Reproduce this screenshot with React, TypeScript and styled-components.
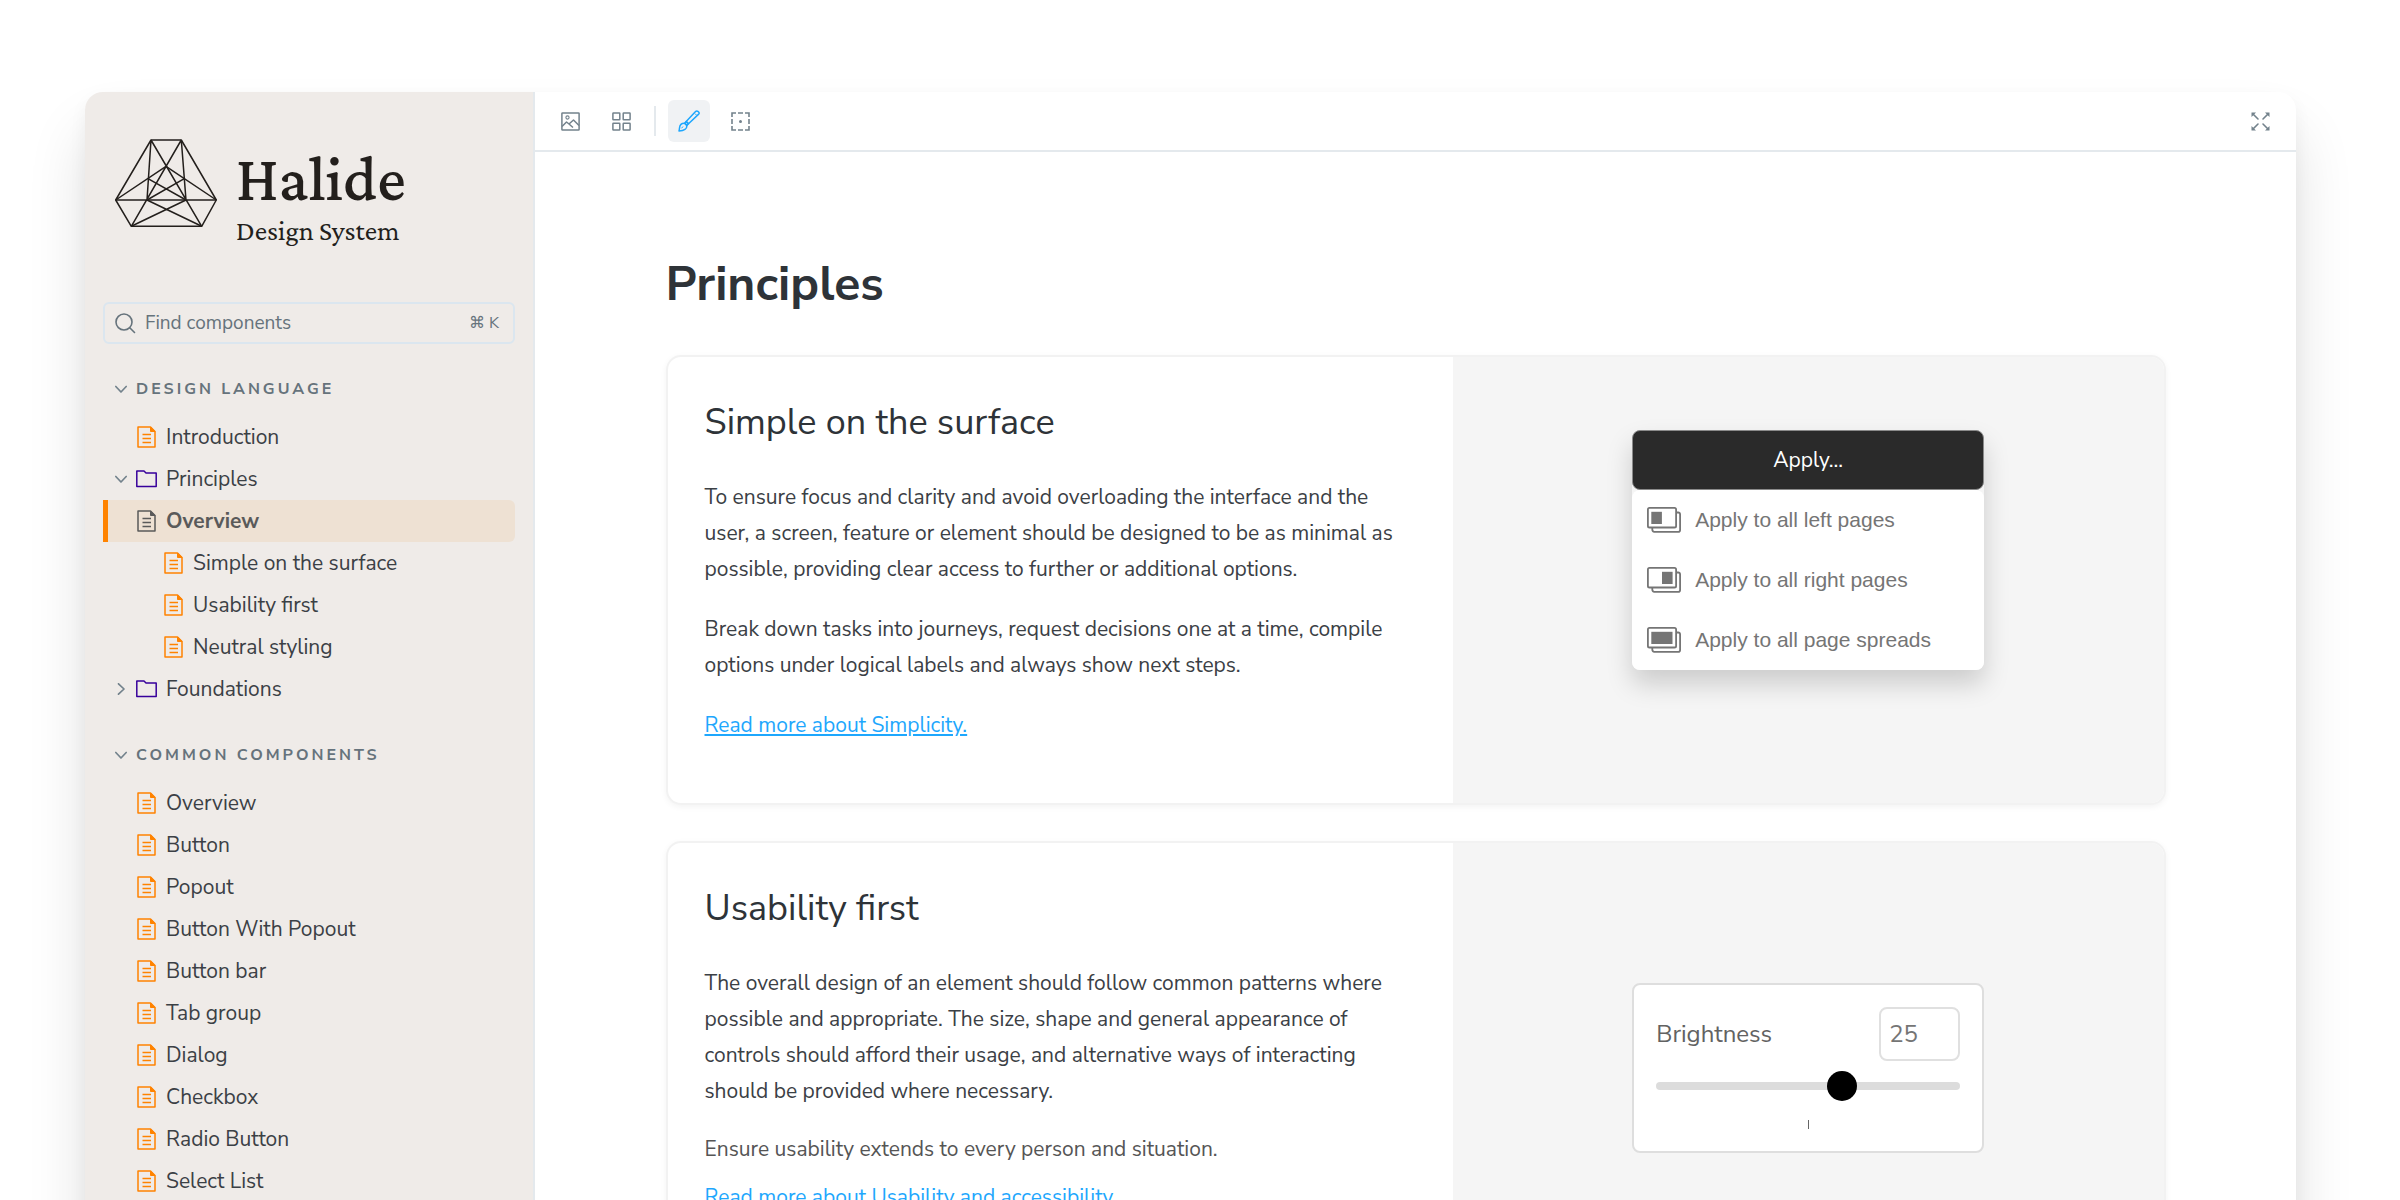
import React from 'react';
import styled, { createGlobalStyle, css } from 'styled-components';

const sans = `"Nunito Sans", "Open Sans", "Noto Sans", sans-serif`;
const serif = `"Crimson Pro", "Crimson Text", "Liberation Serif", serif`;
const color = {
  sidebar: '#efebe8',
  line: '#e4e9ed',
  muted: '#66737c',
  icon: '#73828c',
  text: '#3b4045',
  heading: '#2e3338',
  link: '#1ea7fd',
  orange: '#ff8300',
  indigo: '#37009b',
};

const GlobalStyle = createGlobalStyle`
  *, *::before, *::after { box-sizing: border-box; }
  html, body { margin: 0; background: #fff; }
  body {
    font-family: ${sans};
    font-size: 21px;
    line-height: 36px;
    color: ${color.text};
    -webkit-font-smoothing: antialiased;
  }
  button, input { font-family: inherit; }
`;

const Page = styled.div`
  display: flex;
  height: 100vh;
  overflow: hidden;
  padding: 92px 104px 0 85px;
`;

const Window = styled.div`
  flex: 1;
  display: flex;
  min-height: 1240px;
  border-radius: 18px;
  background: #fff;
  box-shadow: 0 40px 60px rgba(0, 0, 0, 0.12), 0 8px 18px rgba(0, 0, 0, 0.05);
`;

const Sidebar = styled.aside`
  flex: none;
  width: 450px;
  padding: 45px 18px 0;
  border-right: 2px solid ${color.line};
  border-radius: 18px 0 0 0;
  background: ${color.sidebar};
`;

const Brand = styled.a`
  display: flex;
  gap: 19px;
  height: 165px;
  padding: 2px 12px 0;
  color: #231f1c;
  text-decoration: none;
`;

const BrandText = styled.span`
  display: flex;
  flex-direction: column;
  font-family: ${serif};
`;

const BrandName = styled.span`
  font-size: 64px;
  font-weight: 500;
  line-height: 80px;
`;

const BrandSub = styled.span`
  font-size: 28px;
  line-height: 24px;
`;

const Search = styled.label`
  display: flex;
  align-items: center;
  gap: 9px;
  height: 42px;
  padding: 0 14px 0 10px;
  border: 2px solid #dbe6ef;
  border-radius: 6px;
  color: ${color.muted};
`;

const SearchInput = styled.input`
  flex: 1;
  min-width: 0;
  padding: 0;
  border: 0;
  outline: 0;
  background: transparent;
  font-size: 19px;
  color: inherit;
  &::placeholder { color: inherit; opacity: 1; }
`;

const Shortcut = styled.kbd`
  display: flex;
  align-items: center;
  gap: 4px;
  font-family: inherit;
  font-size: 16px;
  line-height: 24px;
`;

const SectionToggle = styled.button`
  display: flex;
  align-items: center;
  gap: 9px;
  width: 100%;
  height: 36px;
  margin: 27px 0 9px;
  padding: 0 12px;
  border: 0;
  background: none;
  color: ${color.muted};
  font-size: 16px;
  font-weight: 700;
  line-height: 24px;
  letter-spacing: 3px;
  text-transform: uppercase;
`;

const NavList = styled.ul`
  margin: 0;
  padding: 0;
  list-style: none;
`;

const NavLink = styled.a<{ $nested?: boolean; $active?: boolean }>`
  display: flex;
  align-items: center;
  gap: 9px;
  height: 42px;
  padding-left: ${(p) => (p.$nested ? 39 : 12)}px;
  color: ${color.text};
  text-decoration: none;
  ${(p) =>
    p.$active &&
    css`
      border-radius: 0 6px 6px 0;
      background: #eee1d3;
      box-shadow: inset 5px 0 ${color.orange};
      color: #5a5a5a;
      font-weight: 700;
    `}
`;

const ChevronSlot = styled.span`
  display: flex;
  flex: none;
  width: 12px;
  color: ${color.icon};
`;

const IconSlot = styled.span<{ $color: string }>`
  display: flex;
  flex: none;
  width: 21px;
  justify-content: center;
  color: ${(p) => p.$color};
`;

const Main = styled.main`
  flex: 1;
  min-width: 0;
`;

const Toolbar = styled.div`
  display: flex;
  align-items: center;
  gap: 9px;
  height: 60px;
  padding: 0 15px 0 14px;
  border-bottom: 2px solid ${color.line};
`;

const ToolButton = styled.button<{ $active?: boolean; $last?: boolean }>`
  display: flex;
  align-items: center;
  justify-content: center;
  width: 42px;
  height: 42px;
  padding: 0;
  border: 0;
  border-radius: 6px;
  background: ${(p) => (p.$active ? '#f0f2f4' : 'none')};
  color: ${(p) => (p.$active ? color.link : color.icon)};
  ${(p) => p.$last && 'margin-left: auto;'}
`;

const Divider = styled.span`
  width: 2px;
  height: 30px;
  margin: 0 3px;
  background: ${color.line};
`;

const Content = styled.div`
  display: flex;
  flex-direction: column;
  gap: 36px;
  max-width: 1500px;
  margin: 0 auto;
  padding: 100px 0 60px;
`;

const Title = styled.h1`
  margin: 0 0 3px;
  color: ${color.heading};
  font-size: 48px;
  font-weight: 700;
  line-height: 64px;
`;

const Card = styled.article<{ $tall?: boolean }>`
  display: grid;
  grid-template-columns: minmax(0, 21fr) minmax(0, 19fr);
  min-height: ${(p) => (p.$tall ? 454 : 450)}px;
  overflow: hidden;
  border: 2px solid #f2f2f2;
  border-radius: 15px;
  background: #fff;
  box-shadow: 0 2px 6px rgba(0, 0, 0, 0.05);
`;

const Copy = styled.div`
  padding: 40px 37px 36px;
`;

const CardTitle = styled.h2`
  margin: 0 0 30px;
  color: ${color.heading};
  font-size: 36px;
  font-weight: 400;
  line-height: 52px;
`;

const Paragraph = styled.p`
  margin: 0 0 24px;
`;

const Note = styled.p`
  margin: 0 0 14px;
  color: #555;
  line-height: 32px;
`;

const TextLink = styled.a`
  color: ${color.link};
  text-decoration: underline;
`;

const Preview = styled.div<{ $top?: boolean }>`
  display: flex;
  flex-direction: column;
  align-items: center;
  justify-content: ${(p) => (p.$top ? 'flex-start' : 'center')};
  padding: ${(p) => (p.$top ? '73px 24px' : '0 24px')};
  background: #f5f5f5;
`;

const Popout = styled.div`
  width: 352px;
  border-radius: 8px;
  box-shadow: 0 14px 26px rgba(0, 0, 0, 0.17);
`;

const ApplyButton = styled.button`
  display: block;
  width: 100%;
  height: 60px;
  padding: 0;
  border: 1px solid #8a8a8a;
  border-radius: 8px;
  background: #2a2a2a;
  color: #fff;
  font-size: 21px;
`;

const Menu = styled.div`
  border-radius: 8px;
  background: #fff;
`;

const MenuItem = styled.button`
  display: flex;
  align-items: center;
  gap: 14px;
  width: 100%;
  height: 60px;
  padding: 0 15px;
  border: 0;
  background: none;
  color: #757575;
  font-family: "Liberation Sans", Arial, sans-serif;
  font-size: 21px;
`;

const Widget = styled.div`
  width: 352px;
  padding: 22px;
  border: 2px solid #dedede;
  border-radius: 8px;
  background: #fff;
  color: #626262;
  font-size: 24px;
`;

const WidgetRow = styled.div`
  display: flex;
  align-items: center;
  justify-content: space-between;
`;

const ValueInput = styled.input`
  width: 81px;
  height: 54px;
  padding: 0 8px;
  border: 2px solid #e0e0e0;
  border-radius: 8px;
  background: #fff;
  color: #757575;
  font-size: 24px;
`;

const Slider = styled.input`
  display: block;
  width: 100%;
  height: 30px;
  margin: 10px 0 19px;
  appearance: none;
  background: none;
  &::-webkit-slider-runnable-track {
    height: 8px;
    border-radius: 4px;
    background: #dcdcdc;
  }
  &::-webkit-slider-thumb {
    appearance: none;
    width: 30px;
    height: 30px;
    margin-top: -11px;
    border-radius: 50%;
    background: #000;
  }
`;

const Tick = styled.div`
  width: 1px;
  height: 9px;
  margin: 0 auto;
  background: #666;
`;

const LogoMark = () => (
  <svg width="102" height="89" viewBox="0 0 102 89" fill="none" stroke="currentColor" strokeWidth="1.5" strokeLinejoin="round">
    <path d="M36 1H66.3L101.3 61L86.7 87.3H16.3L.7 61Z" />
    <path d="M.7 61H101.3M36 1L86.7 87.3M66.3 1L16.3 87.3M36 1L32 61M66.3 1L71 61" />
    <path d="M.7 61L51 27.3L101.3 61M33 39.7L71 61M69.3 39.7L32 61M32 61L86.7 87.3M71 61L16.3 87.3" />
  </svg>
);

const SearchIcon = () => (
  <svg width="21" height="21" viewBox="0 0 21 21" fill="none" stroke="currentColor" strokeWidth="1.6" strokeLinecap="round">
    <circle cx="9" cy="9" r="8" />
    <path d="M15 15L19.5 19.5" />
  </svg>
);

const Chevron = ({ right }: { right?: boolean }) => (
  <svg width="12" height="12" viewBox="0 0 12 12" fill="none" stroke="currentColor" strokeWidth="1.7" strokeLinecap="round" strokeLinejoin="round">
    <path d={right ? 'M3.5 .8L9 6L3.5 11.2' : 'M.8 3.5L6 9L11.2 3.5'} />
  </svg>
);

const DocIcon = () => (
  <svg width="19" height="22" viewBox="0 0 19 22" fill="none" stroke="currentColor" strokeWidth="1.5" strokeLinejoin="round">
    <path d="M1 1H13.5L18 5.5V21H1Z" />
    <path d="M13.5 1V5.5H18Z" fill="currentColor" strokeWidth="1" />
    <path d="M5.5 8.5H14M5.5 12.5H14M5.5 16.5H14" />
  </svg>
);

const FolderIcon = () => (
  <svg width="21" height="18" viewBox="0 0 21 18" fill="none" stroke="currentColor" strokeWidth="1.5" strokeLinejoin="round">
    <path d="M.8 1H8L10 3H20.2V16.6H.8Z" />
  </svg>
);

const ImageIcon = () => (
  <svg width="19" height="19" viewBox="0 0 19 19" fill="none" stroke="currentColor" strokeWidth="1.5" strokeLinejoin="round">
    <rect x=".9" y=".9" width="17.2" height="17.2" rx=".6" />
    <circle cx="6.5" cy="5.5" r="1.6" strokeWidth="1.1" />
    <path d="M1 14.5L5.5 10L8 12L12.5 8L18 13.5M8 12L12 15.5" />
  </svg>
);

const GridIcon = () => (
  <svg width="19" height="19" viewBox="0 0 19 19" fill="none" stroke="currentColor" strokeWidth="1.5">
    <rect x=".9" y=".9" width="6.9" height="6.9" rx=".5" />
    <rect x="11.2" y=".9" width="6.9" height="6.9" rx=".5" />
    <rect x=".9" y="11.2" width="6.9" height="6.9" rx=".5" />
    <rect x="11.2" y="11.2" width="6.9" height="6.9" rx=".5" />
  </svg>
);

const BrushIcon = () => (
  <svg width="22" height="22" viewBox="0 0 22 22" fill="none" stroke="currentColor" strokeWidth="1.5" strokeLinejoin="round">
    <path d="M8.2 11.6L17.8 1.3Q18.8 .5 19.8 1.3L20.8 2.3Q21.5 3.2 20.7 4.1L10.5 13.8Z" />
    <path d="M8.2 11.6L10.5 13.8L8.9 15.4L6.6 13.2Z" />
    <path d="M6.6 13.2L8.9 15.4Q9 20.8 1 20.9Q1.3 20 1.5 18Q2 13 6.6 13.2Z" />
    <path d="M17 3.6L18.6 5.2M5 16.5L3.5 18.3" strokeWidth="1" />
  </svg>
);

const OutlineIcon = () => (
  <svg width="19" height="19" viewBox="0 0 19 19" fill="none" stroke="currentColor" strokeWidth="1.6">
    <path d="M5 1H1V5M14 1H18V5M5 18H1V14M14 18H18V14" />
    <path d="M7 1H12M7 18H12M1 7V12M18 7V12" />
    <circle cx="9.5" cy="9.5" r="1.5" fill="currentColor" stroke="none" />
  </svg>
);

const ExpandIcon = () => (
  <svg width="19" height="19" viewBox="0 0 19 19" stroke="currentColor" strokeWidth="1.6" strokeLinecap="round">
    <path d="M2 2L7 7M17 2L12 7M2 17L7 12M17 17L12 12" />
    <path
      d="M.5 .5H5L.5 5ZM18.5 .5H14L18.5 5ZM.5 18.5H5L.5 14ZM18.5 18.5H14L18.5 14Z"
      fill="currentColor"
      stroke="none"
    />
  </svg>
);

const PagesIcon = ({ fill }: { fill: 'left' | 'right' | 'both' }) => (
  <svg width="34" height="26" viewBox="0 0 34 26" fill="none" stroke="currentColor" strokeWidth="1.8">
    <rect x=".9" y=".9" width="28.2" height="19.6" rx="1.6" />
    <path d="M5.3 20.5V22.6Q5.3 24.8 7.3 24.8H31.2Q33.1 24.8 33.1 22.9V7.4Q33.1 5.5 31.2 5.5H29.1" />
    <rect
      x={fill === 'right' ? 15 : 4.3}
      y="4.8"
      width={fill === 'both' ? 21.2 : 10.6}
      height="12.2"
      fill="currentColor"
      stroke="none"
    />
  </svg>
);

type Item = {
  label: string;
  kind?: 'doc' | 'folder';
  open?: boolean;
  nested?: boolean;
  active?: boolean;
};

const designItems: Item[] = [
  { label: 'Introduction' },
  { label: 'Principles', kind: 'folder', open: true },
  { label: 'Overview', active: true },
  { label: 'Simple on the surface', nested: true },
  { label: 'Usability first', nested: true },
  { label: 'Neutral styling', nested: true },
  { label: 'Foundations', kind: 'folder' },
];

const componentItems: Item[] = [
  'Overview',
  'Button',
  'Popout',
  'Button With Popout',
  'Button bar',
  'Tab group',
  'Dialog',
  'Checkbox',
  'Radio Button',
  'Select List',
].map((label) => ({ label }));

const NavSection = ({ title, items }: { title: string; items: Item[] }) => (
  <section>
    <SectionToggle type="button" aria-expanded="true">
      <ChevronSlot>
        <Chevron />
      </ChevronSlot>
      {title}
    </SectionToggle>
    <NavList>
      {items.map(({ label, kind, open, nested, active }) => (
        <li key={label}>
          <NavLink href="#" $nested={nested} $active={active} aria-current={active ? 'page' : undefined}>
            <ChevronSlot>{kind === 'folder' && <Chevron right={!open} />}</ChevronSlot>
            <IconSlot $color={active ? '#5a5a5a' : kind === 'folder' ? color.indigo : color.orange}>
              {kind === 'folder' ? <FolderIcon /> : <DocIcon />}
            </IconSlot>
            {label}
          </NavLink>
        </li>
      ))}
    </NavList>
  </section>
);

export default function App() {
  const [value, setValue] = React.useState(25);

  return (
    <>
      <GlobalStyle />
      <Page>
        <Window>
          <Sidebar>
            <Brand href="#">
              <LogoMark />
              <BrandText>
                <BrandName>Halide</BrandName>
                <BrandSub>Design System</BrandSub>
              </BrandText>
            </Brand>
            <Search>
              <SearchIcon />
              <SearchInput type="text" placeholder="Find components" aria-label="Find components" />
              <Shortcut>
                <span>⌘</span>
                <span>K</span>
              </Shortcut>
            </Search>
            <nav>
              <NavSection title="Design language" items={designItems} />
              <NavSection title="Common components" items={componentItems} />
            </nav>
          </Sidebar>

          <Main>
            <Toolbar>
              <ToolButton type="button" aria-label="Change background">
                <ImageIcon />
              </ToolButton>
              <ToolButton type="button" aria-label="Toggle grid">
                <GridIcon />
              </ToolButton>
              <Divider />
              <ToolButton type="button" aria-label="Change theme" $active>
                <BrushIcon />
              </ToolButton>
              <ToolButton type="button" aria-label="Toggle outline">
                <OutlineIcon />
              </ToolButton>
              <ToolButton type="button" aria-label="Full screen" $last>
                <ExpandIcon />
              </ToolButton>
            </Toolbar>

            <Content>
              <Title>Principles</Title>

              <Card>
                <Copy>
                  <CardTitle>Simple on the surface</CardTitle>
                  <Paragraph>
                    To ensure focus and clarity and avoid overloading the interface and the user, a screen, feature or
                    element should be designed to be as minimal as possible, providing clear access to further or
                    additional options.
                  </Paragraph>
                  <Paragraph>
                    Break down tasks into journeys, request decisions one at a time, compile options under logical
                    labels and always show next steps.
                  </Paragraph>
                  <Paragraph>
                    <TextLink href="#">Read more about Simplicity.</TextLink>
                  </Paragraph>
                </Copy>
                <Preview $top>
                  <Popout>
                    <ApplyButton type="button">Apply...</ApplyButton>
                    <Menu>
                      <MenuItem type="button">
                        <PagesIcon fill="left" />
                        Apply to all left pages
                      </MenuItem>
                      <MenuItem type="button">
                        <PagesIcon fill="right" />
                        Apply to all right pages
                      </MenuItem>
                      <MenuItem type="button">
                        <PagesIcon fill="both" />
                        Apply to all page spreads
                      </MenuItem>
                    </Menu>
                  </Popout>
                </Preview>
              </Card>

              <Card $tall>
                <Copy>
                  <CardTitle>Usability first</CardTitle>
                  <Paragraph>
                    The overall design of an element should follow common patterns where possible and appropriate. The
                    size, shape and general appearance of controls should afford their usage, and alternative ways of
                    interacting should be provided where necessary.
                  </Paragraph>
                  <Note>Ensure usability extends to every person and situation.</Note>
                  <Paragraph>
                    <TextLink href="#">Read more about Usability and accessibility</TextLink>
                  </Paragraph>
                </Copy>
                <Preview>
                  <Widget>
                    <WidgetRow>
                      <label htmlFor="brightness">Brightness</label>
                      <ValueInput
                        id="brightness"
                        type="text"
                        value={value}
                        onChange={(e) => setValue(Number(e.target.value) || 0)}
                      />
                    </WidgetRow>
                    <Slider
                      type="range"
                      min={-100}
                      max={100}
                      value={value}
                      aria-label="Brightness"
                      onChange={(e) => setValue(Number(e.target.value))}
                    />
                    <Tick />
                  </Widget>
                </Preview>
              </Card>
            </Content>
          </Main>
        </Window>
      </Page>
    </>
  );
}
